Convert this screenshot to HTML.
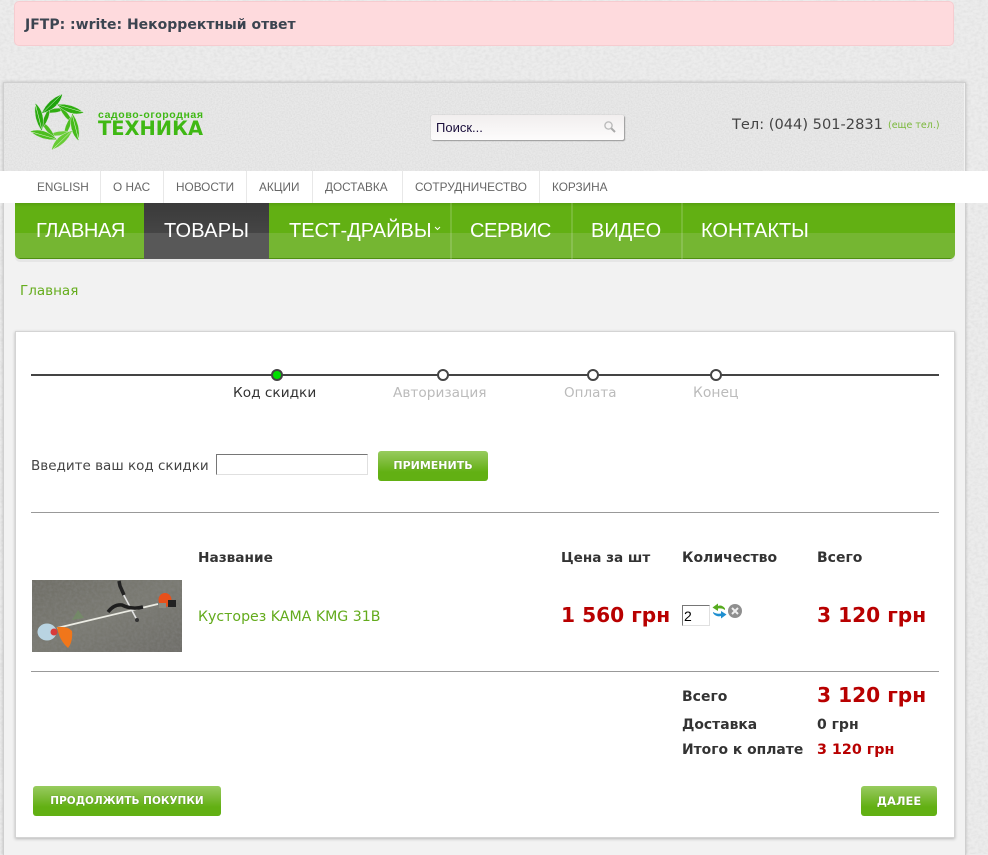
<!DOCTYPE html>
<html lang="ru">
<head>
<meta charset="utf-8">
<title>Корзина</title>
<style>
html,body{margin:0;padding:0}
body{width:988px;height:854px;overflow:hidden;position:relative;background:#ececec;font-family:"DejaVu Sans","Liberation Sans",sans-serif;color:#333}
.a{position:absolute;white-space:nowrap}
.t{position:absolute;white-space:nowrap;line-height:20px;height:20px}
.nav{font:20px/20px "Liberation Sans",sans-serif;color:#fff;position:absolute;top:221px;white-space:nowrap}
.top{font:11.800px/16px "Liberation Sans",sans-serif;color:#666;position:absolute;top:179px;white-space:nowrap}
.sep{position:absolute;top:171px;height:32px;width:1px;background:#e8e8e8}
.nsep{position:absolute;top:203px;height:56px;width:2px;background:rgba(255,255,255,.15)}
.b{font-weight:bold;font-size:13.800px;color:#333}
.btn{position:absolute;border-radius:3px;background:linear-gradient(#97cc5e 0,#86c046 25%,#62b013 70%,#62b013 100%);color:#fff;font:bold 11px/30px "DejaVu Sans",sans-serif;text-align:center;height:30px;text-shadow:0 0 1px rgba(0,0,0,.35)}
.hr{position:absolute;height:1px;background:#999;left:31px;width:908px}
.dot{position:absolute;top:369px;width:8px;height:8px;border:2px solid #444;border-radius:50%;background:#fff}
.red{color:#b80000;font-weight:bold}
</style>
</head>
<body>
<svg class="a" style="left:0;top:0" width="988" height="854" aria-hidden="true">
<filter id="n" x="0" y="0" width="100%" height="100%"><feTurbulence type="fractalNoise" baseFrequency=".28 .38" numOctaves="2" seed="4"/><feColorMatrix values="0 0 0 0 .55 0 0 0 0 .55 0 0 0 0 .55 .5 0 0 0 -.18"/></filter>
<rect width="988" height="854" filter="url(#n)"/>
</svg>

<div class="a" style="left:14px;top:1px;width:938px;height:43px;background:#fedadd;border:1px solid #f6ccd0;border-radius:5px"></div>
<div class="t b" style="left:25px;top:15px;color:#3b4450;font-size:14px">JFTP: :write: Некорректный ответ</div>

<div class="a" style="left:3px;top:82px;width:961px;height:772px;background:#f2f2f2;border:1px solid #cfcfcf;border-bottom:0;box-shadow:0 0 3px rgba(0,0,0,.2)"></div>
<div class="a" style="left:4px;top:83px;width:960px;height:88px;background:#e9e9e9"></div>
<svg class="a" style="left:4px;top:83px" width="960" height="88" aria-hidden="true">
<filter id="n2" x="0" y="0" width="100%" height="100%"><feTurbulence type="fractalNoise" baseFrequency=".7" numOctaves="2" seed="8"/><feColorMatrix values="0 0 0 0 .5 0 0 0 0 .5 0 0 0 0 .5 .5 0 0 0 -.16"/></filter>
<rect width="960" height="88" filter="url(#n2)"/>
</svg>

<svg class="a" style="left:25px;top:88px" width="190" height="70" viewBox="25 88 190 70">
<defs>
<g id="lf"><path d="M-15.500-8.500Q-9-23 5.500-28 2.500-13.500-15.500-8.500Z" stroke="#e9e9e9" stroke-width=".4"/><path d="M-13.500-10 4-27" stroke="#e9f7df" stroke-width=".5" fill="none"/></g>
<g id="lf2"><path d="M-14-7Q-6-15 6-14.500 0-8-14-7Z" stroke="#e9e9e9" stroke-width=".4"/></g>
</defs>
<g transform="translate(57 122)">
<use href="#lf2" fill="#31ad12" transform="rotate(10)"/><use href="#lf2" fill="#3fb516" transform="rotate(70)"/><use href="#lf2" fill="#4dbd20" transform="rotate(130)"/><use href="#lf2" fill="#6ccd3a" transform="rotate(190)"/><use href="#lf2" fill="#4dbd20" transform="rotate(250)"/><use href="#lf2" fill="#2fa80f" transform="rotate(310)"/>
<use href="#lf" fill="#1fa30d"/><use href="#lf" fill="#2fae10" transform="rotate(60)"/><use href="#lf" fill="#45bb1a" transform="rotate(120)"/><use href="#lf" fill="#68cc35" transform="rotate(180)"/><use href="#lf" fill="#4dbd20" transform="rotate(240)"/><use href="#lf" fill="#2bab10" transform="rotate(300)"/>
</g>
<text x="98" y="118" font-family="Liberation Sans" font-weight="bold" font-size="10.500" fill="#3fb814" textLength="105" lengthAdjust="spacing">садово-огородная</text>
<text x="98" y="135" font-family="DejaVu Sans" font-weight="bold" font-size="19.500" fill="#3fb814" textLength="105" lengthAdjust="spacingAndGlyphs">ТЕХНИКА</text>
</svg>

<div class="a" style="left:431px;top:115px;width:193px;height:25px;background:linear-gradient(#f1eeee,#fdfcfc);border-radius:2px;box-shadow:1px 1px 1px #999,0 0 1px #aaa"></div>
<div class="a" style="left:436px;top:120px;font:13px/16px 'Liberation Sans',sans-serif;color:#1b0f3c">Поиск...</div>
<svg class="a" style="left:603px;top:120px" width="14" height="14" viewBox="0 0 14 14"><circle cx="5.500" cy="5.500" r="3.600" fill="none" stroke="#b9b9b9" stroke-width="1.300"/><path d="M8.300 8.300 12 12" stroke="#a9a9a9" stroke-width="2"/></svg>

<div class="t" style="left:732px;top:115px;font-size:14.600px;color:#444">Тел: (044) 501-2831</div>
<div class="t" style="left:888px;top:116px;font-size:9.500px;color:#7ab83a">(еще тел.)</div>

<div class="a" style="left:0;top:171px;width:988px;height:32px;background:#fff"></div>
<div class="top" style="left:37px">ENGLISH</div><div class="sep" style="left:100px"></div>
<div class="top" style="left:113px">О НАС</div><div class="sep" style="left:163px"></div>
<div class="top" style="left:176px">НОВОСТИ</div><div class="sep" style="left:246px"></div>
<div class="top" style="left:259px">АКЦИИ</div><div class="sep" style="left:312px"></div>
<div class="top" style="left:325px">ДОСТАВКА</div><div class="sep" style="left:402px"></div>
<div class="top" style="left:415px">СОТРУДНИЧЕСТВО</div><div class="sep" style="left:539px"></div>
<div class="top" style="left:552px">КОРЗИНА</div>

<div class="a" style="left:15px;top:203px;width:940px;height:56px;background:linear-gradient(#579f10 0,#62b013 4px,#62b013 30px,#75b632 30px,#75b632 55px,#4f8f10 55px);border-radius:0 0 5px 5px;box-shadow:0 3px 0 #e6e6e6"></div>
<div class="a" style="left:144px;top:203px;width:125px;height:56px;background:linear-gradient(#3a3a3a 0,#454545 30px,#585858 30px)"></div>
<div class="nsep" style="left:450px"></div><div class="nsep" style="left:571px"></div><div class="nsep" style="left:681px"></div>
<div class="nav" style="left:36px;letter-spacing:-.4px">ГЛАВНАЯ</div>
<div class="nav" style="left:164px;letter-spacing:.2px">ТОВАРЫ</div>
<div class="nav" style="left:289px">ТЕСТ-ДРАЙВЫ</div>
<svg class="a" style="left:434px;top:226px" width="7" height="5"><path d="M1 1 3.500 3.500 6 1" fill="none" stroke="#fff" stroke-width="1"/></svg>
<div class="nav" style="left:470px;letter-spacing:-.4px">СЕРВИС</div>
<div class="nav" style="left:591px">ВИДЕО</div>
<div class="nav" style="left:701px">КОНТАКТЫ</div>

<div class="t" style="left:20px;top:281px;font-size:13.500px;color:#66ad1e">Главная</div>

<div class="a" style="left:15px;top:331px;width:938px;height:505px;background:#fff;border:1px solid #d4d4d4;box-shadow:0 1px 3px rgba(0,0,0,.25)"></div>

<div class="a" style="left:31px;top:374px;width:908px;height:2px;background:#444"></div>
<div class="dot" style="left:271px;background:#00e000"></div>
<div class="dot" style="left:437px"></div>
<div class="dot" style="left:587px"></div>
<div class="dot" style="left:710px"></div>
<div class="t" style="left:233px;top:383px;font-size:13.700px;color:#333">Код скидки</div>
<div class="t" style="left:393px;top:383px;font-size:13.700px;color:#bbb">Авторизация</div>
<div class="t" style="left:564px;top:383px;font-size:13.500px;color:#bbb">Оплата</div>
<div class="t" style="left:693px;top:383px;font-size:13.900px;color:#bbb">Конец</div>

<div class="t" style="left:31px;top:456px;font-size:13.500px;color:#444">Введите ваш код скидки</div>
<div class="a" style="left:216px;top:454px;width:150px;height:19px;background:#fff;border:1px solid #e0e0e0;border-top-color:#767676;border-left-color:#767676"></div>
<div class="btn" style="left:378px;top:451px;width:110px">ПРИМЕНИТЬ</div>

<div class="hr" style="top:512px"></div>

<div class="t b" style="left:198px;top:548px;font-size:13.700px">Название</div>
<div class="t b" style="left:561px;top:548px;font-size:13.600px">Цена за шт</div>
<div class="t b" style="left:682px;top:548px;font-size:14px">Количество</div>
<div class="t b" style="left:817px;top:548px;font-size:14px">Всего</div>

<svg class="a" style="left:32px;top:580px" width="150" height="72" viewBox="0 0 150 72">
<defs><linearGradient id="g" x1="0" y1="0" x2="1" y2="1"><stop offset="0" stop-color="#6f6e66"/><stop offset=".5" stop-color="#7a7a72"/><stop offset="1" stop-color="#6e6d68"/></linearGradient>
<filter id="n3" x="0" y="0" width="100%" height="100%"><feTurbulence type="fractalNoise" baseFrequency=".35" numOctaves="2" seed="3"/><feColorMatrix values="0 0 0 0 .25 0 0 0 0 .25 0 0 0 0 .25 .7 0 0 0 -.2"/></filter></defs>
<rect width="150" height="72" fill="url(#g)"/>
<rect width="150" height="72" filter="url(#n3)"/>
<path d="M40 40 46 30 52 38Z" fill="#6f9360" opacity=".6"/>
<path d="M25 48 126 24" stroke="#ecece4" stroke-width="1.800"/>
<path d="M88 8 105 40" stroke="#e4e4e4" stroke-width="1.600"/>
<path d="M87 1 88 6 92 15" stroke="#222" stroke-width="3.500" fill="none"/>
<path d="M76 32Q82 24 90 25 100 30 111 27" stroke="#1e1e1e" stroke-width="3.500" fill="none"/>
<circle cx="105" cy="40" r="2" fill="#333"/>
<ellipse cx="133" cy="20" rx="6.500" ry="7" fill="#e8501a"/><rect x="136" y="20" width="8" height="7" fill="#222"/><rect x="127" y="23" width="7" height="5" fill="#8a8a80"/>
<ellipse cx="15" cy="52" rx="9.500" ry="8.500" fill="#b9d4e2"/><circle cx="22" cy="52" r="3.500" fill="#d83a3a"/>
<path d="M25 47Q36 46 40 51 41 62 36 68 27 60 25 47Z" fill="#f0761a"/>
</svg>

<div class="t" style="left:198px;top:607px;font-size:14.150px;color:#63ab1c">Кусторез KAMA KMG 31B</div>
<div class="t red" style="left:561px;top:605px;font-size:20.200px">1 560 грн</div>

<div class="a" style="left:682px;top:605px;width:26px;height:19px;background:#fff;border:1px solid #e0e0e0;border-top-color:#767676;border-left-color:#767676;font:14px/21px 'Liberation Sans',sans-serif;color:#000;text-indent:1px">2</div>
<svg class="a" style="left:712px;top:603px" width="15" height="17" viewBox="0 0 15 17"><path d="M13 5.500C11 2.500 8 2 6 3V0.500L0.500 4.500 6 8V5.500C9 5 11 5.500 13 7Z" fill="#57ab1f"/><path d="M1 10C3 13 6 14 9 13V15.500L14.500 11.500 9 8V10.500C6 11 3.500 10.500 1 9Z" fill="#1f8fd0"/></svg>
<svg class="a" style="left:727px;top:603px" width="16" height="16" viewBox="0 0 16 16"><circle cx="8" cy="8" r="7" fill="#8f8f8f"/><path d="M5 5 11 11M11 5 5 11" stroke="#f0f0f0" stroke-width="2"/></svg>

<div class="t red" style="left:817px;top:605px;font-size:20.200px">3 120 грн</div>

<div class="hr" style="top:671px"></div>

<div class="t b" style="left:682px;top:687px;font-size:14px">Всего</div>
<div class="t red" style="left:817px;top:685px;font-size:20.200px">3 120 грн</div>
<div class="t b" style="left:682px;top:715px;font-size:13.900px">Доставка</div>
<div class="t b" style="left:817px;top:715px;font-size:14px">0 грн</div>
<div class="t b" style="left:682px;top:740px;font-size:13.900px">Итого к оплате</div>
<div class="t red" style="left:817px;top:740px;font-size:14.300px">3 120 грн</div>

<div class="btn" style="left:33px;top:786px;width:188px;font-size:10.500px">ПРОДОЛЖИТЬ ПОКУПКИ</div>
<div class="btn" style="left:861px;top:786px;width:76px;font-size:11.500px">ДАЛЕЕ</div>
</body>
</html>
